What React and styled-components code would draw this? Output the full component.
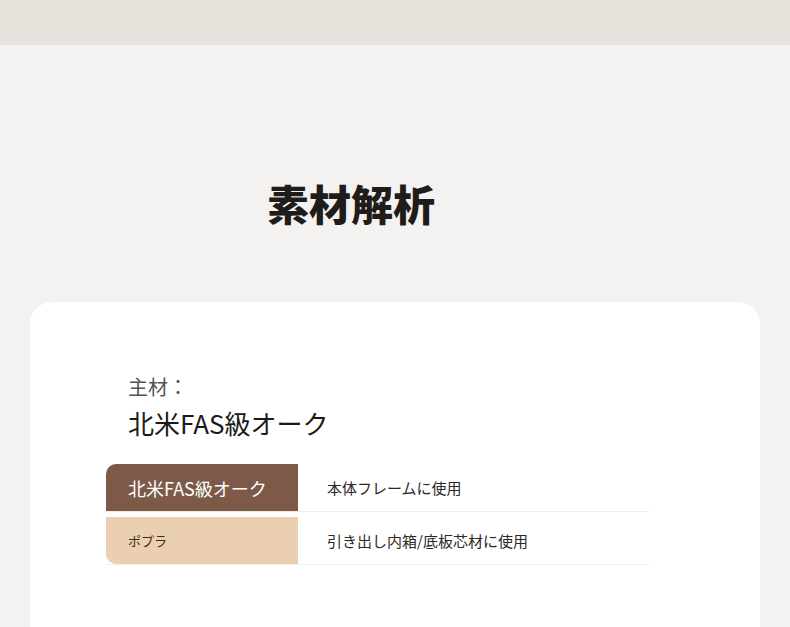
import React from "react";
import styled, { createGlobalStyle } from "styled-components";

const Global = createGlobalStyle`
  html, body { margin: 0; padding: 0; background: #f3f2f0; }
  body { font-family: "Noto Sans CJK JP", "Noto Sans", sans-serif; }
  * { box-sizing: border-box; }
`;

const Page = styled.div`
  height: 627px;
  background: #f3f2f0;
  overflow: hidden;
`;

const TopBar = styled.div`
  height: 45px;
  background: #e7e2dc;
`;

const TitleWrap = styled.div`
  width: 288px;
  margin: 128px auto 0;
  padding: 0 16px;
`;

const Title = styled.h1`
  margin: 0;
  font-size: 42px;
  line-height: 60px;
  font-weight: 900;
  color: #1f1c1a;
  letter-spacing: 0;
`;

const Card = styled.section`
  margin: 69px 30px 0;
  background: #ffffff;
  border-radius: 22px;
  min-height: 400px;
  padding: 70px 111px 40px 76px;
`;

const Labels = styled.div`
  padding-left: 22px;
`;

const SubLabel = styled.div`
  font-size: 20px;
  line-height: 30px;
  color: #555250;
`;

const MainLabel = styled.div`
  margin-top: 2px;
  font-size: 26px;
  line-height: 37px;
  font-weight: 400;
  color: #1c1a19;
`;

const Table = styled.div`
  margin-top: 23px;
  width: 543px;
`;

const Row = styled.div`
  display: grid;
  grid-template-columns: 192px 1fr;
  border-bottom: 1px solid #efedeb;
  & + & {
    margin-top: 5px;
  }
`;

const KeyCell = styled.div`
  height: ${(p) => p.$h}px;
  display: flex;
  align-items: center;
  padding-left: 22px;
  background: ${(p) => p.$bg};
  color: ${(p) => p.$fg};
  font-size: ${(p) => p.$size}px;
  border-radius: ${(p) => p.$radius};
`;

const ValueCell = styled.div`
  display: flex;
  align-items: center;
  padding-left: 29px;
  font-size: 15px;
  color: #2b2826;
`;

export default function App() {
  return (
    <Page>
      <Global />
      <TopBar />
      <TitleWrap>
        <Title>素材解析</Title>
      </TitleWrap>
      <Card>
        <Labels>
          <SubLabel>主材：</SubLabel>
          <MainLabel>北米FAS級オーク</MainLabel>
        </Labels>
        <Table>
          <Row>
            <KeyCell $h={47} $bg="#7c5a47" $fg="#ffffff" $size={18} $radius="10px 0 0 0">
              北米FAS級オーク
            </KeyCell>
            <ValueCell>本体フレームに使用</ValueCell>
          </Row>
          <Row>
            <KeyCell $h={47} $bg="#ebcfb1" $fg="#3a2a20" $size={13} $radius="0 0 0 10px">
              ポプラ
            </KeyCell>
            <ValueCell>引き出し内箱/底板芯材に使用</ValueCell>
          </Row>
        </Table>
      </Card>
    </Page>
  );
}
